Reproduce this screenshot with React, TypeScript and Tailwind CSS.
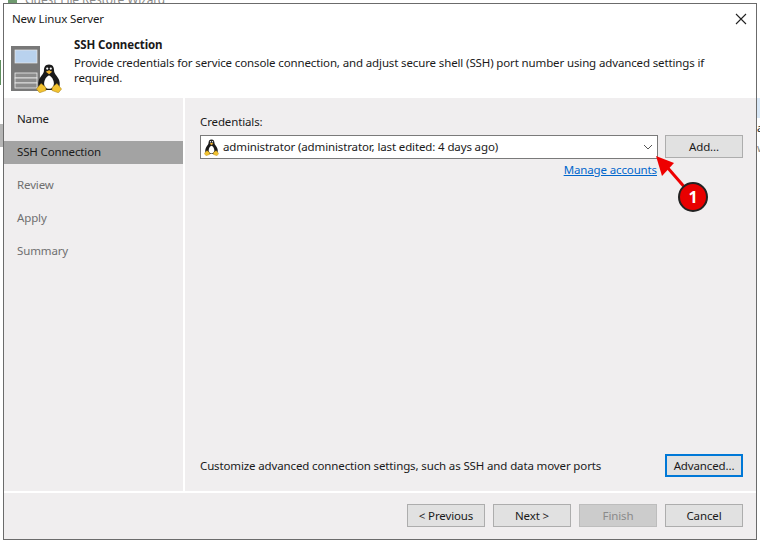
import React from "react";

function Penguin({ className }: { className: string }) {
  return (
    <svg viewBox="0 0 25 28" className={className}>
      <path d="M12.5 0.5C8.8 0.5 7.6 3.2 7.6 6.5C7.6 9.5 3.8 12 2.6 16C1.7 19 2 22 3.6 25L21.4 25C23 22 23.3 19 22.4 16C21.2 12 17.4 9.5 17.4 6.5C17.4 3.2 16.2 0.5 12.5 0.5Z" fill="#1a1a1a" />
      <path d="M12.5 11C10.4 11.6 7.8 15 7.8 18.6C7.8 21.8 9.6 24 12.5 24C15.4 24 17.2 21.8 17.2 18.6C17.2 15 14.6 11.6 12.5 11Z" fill="#ffffff" />
      <path d="M9.4 7.6L12.6 6L15.6 7.6L12.6 10Z" fill="#f2b632" />
      <circle cx="10.8" cy="4.4" r="1.1" fill="#ffffff" />
      <circle cx="14.2" cy="4.4" r="1.1" fill="#ffffff" />
      <path d="M0.4 24.2L4.8 18.8L9.4 22.4L9.6 25.6L3.4 27.8Z" fill="#f2c230" stroke="#a77f10" strokeWidth="0.5" />
      <path d="M24.6 24.2L20.2 18.8L15.6 22.4L15.4 25.6L21.6 27.8Z" fill="#f2c230" stroke="#a77f10" strokeWidth="0.5" />
    </svg>
  );
}

function Btn({ children, variant = "normal" }: { children: React.ReactNode; variant?: "normal" | "focus" | "disabled" }) {
  const cls =
    variant === "focus"
      ? "border-2 border-[#0078d7] bg-[#e1e1e1] text-[#1a1a1a]"
      : variant === "disabled"
        ? "border border-[#bdbdbd] bg-[#cccccc] text-[#8a8a8a]"
        : "border border-[#adadad] bg-[#e1e1e1] text-[#1a1a1a]";
  return <div className={`flex h-[23px] w-[78px] shrink-0 items-center justify-center ${cls}`}>{children}</div>;
}

function Step({ label, state }: { label: string; state: "done" | "active" | "todo" }) {
  const cls =
    state === "active"
      ? "bg-[#a3a3a3] text-[#1a1a1a]"
      : state === "done"
        ? "text-[#1a1a1a]"
        : "text-[#6f6f6f]";
  return <div className={`mb-[10px] flex h-[23px] items-center pb-[1px] pl-[13px] ${cls}`}>{label}</div>;
}

export default function App() {
  return (
    <div className="relative h-[542px] w-[760px] overflow-hidden bg-white font-['Noto_Sans',sans-serif] text-[11.5px] leading-none tracking-[-0.13px] text-[#1a1a1a]">
      {/* windows lying behind the dialog */}
      <div className="absolute left-[25px] top-[-7px] text-[12px] leading-[14px] text-[#8a8a8a]">Guest File Restore Wizard</div>
      <div className="absolute left-[8px] top-0 h-[3px] w-[9px] bg-[#6f9a6f]" />
      <div className="absolute left-0 top-[60px] h-[25px] w-[1px] bg-[#5e8f5e]" />
      <div className="absolute left-0 top-[124px] h-[23px] w-[3px] bg-[#b5b5b5]" />
      <div className="absolute left-[757px] top-[98px] h-[20px] w-[3px] bg-[#d9e8f7]" />
      <div className="absolute left-[757px] top-[122px] leading-[12px]">a</div>
      <div className="absolute left-[757px] top-[142px] leading-[12px] text-[#8a8a8a]">w</div>

      <div className="absolute left-[3px] top-[3px] flex h-[537px] w-[754px] flex-col border-[1.5px] border-[#6b6b6b] bg-[#f0eeef]">
        {/* header */}
        <div className="h-[94px] shrink-0 bg-white">
          <div className="flex h-[30px] items-center justify-between pb-[1px] pl-[8px] pr-[9px]">
            <span>New Linux Server</span>
            <svg viewBox="0 0 12 12" className="h-[12px] w-[12px]">
              <path d="M1 1L11 11M11 1L1 11" stroke="#222" strokeWidth="1.1" fill="none" />
            </svg>
          </div>
          <div className="flex">
            <div className="relative ml-[7px] mt-[12px] h-[48px] w-[63px] shrink-0">
              <svg viewBox="0 0 30 45" className="absolute left-0 top-0 h-[45px] w-[30px]">
                <rect x="0" y="0" width="29" height="45" fill="#787878" />
                <rect x="4" y="4" width="22" height="13" fill="#b9d2ee" stroke="#e8e8e8" strokeWidth="0.7" />
                <rect x="4" y="27" width="22" height="5" fill="#8c8c8c" stroke="#eeeeee" strokeWidth="0.8" />
                <rect x="4" y="32" width="22" height="5" fill="#8c8c8c" stroke="#eeeeee" strokeWidth="0.8" />
                <rect x="4" y="37" width="22" height="5" fill="#8c8c8c" stroke="#eeeeee" strokeWidth="0.8" />
              </svg>
              <Penguin className="absolute left-[25px] top-[18px] h-[29px] w-[26px]" />
            </div>
            <div className="mt-[3px]">
              <div className="mb-[2px] font-bold leading-[16px] tracking-[-0.1px]">SSH Connection</div>
              <div className="w-[650px] leading-[15px]">
                Provide credentials for service console connection, and adjust secure shell (SSH) port number using advanced settings if required.
              </div>
            </div>
          </div>
        </div>

        {/* body */}
        <div className="flex h-[393px] shrink-0">
          <div className="w-[179px] shrink-0 pt-[10px]">
            <Step label="Name" state="done" />
            <Step label="SSH Connection" state="active" />
            <Step label="Review" state="todo" />
            <Step label="Apply" state="todo" />
            <Step label="Summary" state="todo" />
          </div>
          <div className="w-[2px] shrink-0 bg-white" />
          <div className="flex min-w-0 flex-1 flex-col pl-[15px] pr-[13px] pt-[17px]">
            <div className="mb-[6px] leading-[14px]">Credentials:</div>
            <div className="flex items-start gap-[7px]">
              <div className="flex h-[24px] w-[458px] items-center border border-[#7a7a7a] bg-white px-[3px]">
                <Penguin className="mr-[4px] h-[17px] w-[15px] shrink-0" />
                <span className="flex-1 whitespace-nowrap">administrator (administrator, last edited: 4 days ago)</span>
                <svg viewBox="0 0 10 6" className="mr-[1px] h-[6px] w-[10px]">
                  <path d="M1 1L5 5L9 1" stroke="#555" strokeWidth="1" fill="none" />
                </svg>
              </div>
              <Btn>Add...</Btn>
            </div>
            <div className="mt-[3px] w-[457px] text-right leading-[15px] text-[#0066cc] underline">Manage accounts</div>
            <div className="flex-1" />
            <div className="mb-[14px] flex items-center justify-between">
              <span>Customize advanced connection settings, such as SSH and data mover ports</span>
              <Btn variant="focus">Advanced...</Btn>
            </div>
          </div>
        </div>

        {/* footer */}
        <div className="h-[2px] shrink-0 bg-white" />
        <div className="flex flex-1 justify-end gap-[8px] pr-[13px] pt-[11px]">
          <Btn>&lt; Previous</Btn>
          <Btn>Next &gt;</Btn>
          <Btn variant="disabled">Finish</Btn>
          <Btn>Cancel</Btn>
        </div>
      </div>

      {/* callout over the dialog */}
      <svg className="absolute left-[645px] top-[150px] h-[65px] w-[65px]" viewBox="0 0 65 65">
        <path d="M42 40L22 17" stroke="#ee0000" strokeWidth="3" fill="none" />
        <path d="M11 6L29 13L17 26Z" fill="#ee0000" />
      </svg>
      <div className="absolute left-[678px] top-[182px] flex h-[30px] w-[30px] items-center justify-center rounded-full border-2 border-[#222] bg-[#e80000] text-[16px] font-bold text-white">
        1
      </div>
    </div>
  );
}
